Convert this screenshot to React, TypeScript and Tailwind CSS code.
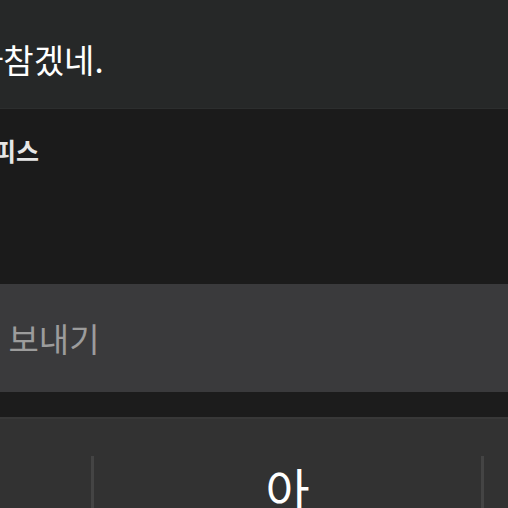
export default function App() {
  return (
    <div
      className="w-[508px] h-[508px] overflow-hidden flex flex-col bg-[#1b1b1b]"
      style={{ fontFamily: '"Noto Sans CJK KR", "Noto Sans", sans-serif' }}
    >
      {/* message bubble */}
      <div className="h-[109px] shrink-0 bg-[#262828] flex items-center pt-[10px] border-b border-[#2c2e2e]">
        <p className="-ml-[27px] whitespace-nowrap text-[33px] leading-none text-white">
          아참겠네.
        </p>
      </div>

      {/* sender */}
      <div className="h-[175px] shrink-0 bg-[#1b1b1b] pt-[29px]">
        <p className="-ml-[30px] whitespace-nowrap text-[25px] leading-none font-semibold text-[#e6e6e6]">
          오피스
        </p>
      </div>

      {/* input */}
      <div className="h-[108px] shrink-0 bg-[#3a3a3c] flex items-center">
        <p className="-ml-[90px] whitespace-nowrap text-[33px] leading-none text-[#9c9c9c]">
          메시지 보내기
        </p>
      </div>

      <div className="h-[25px] shrink-0 bg-[#1c1c1c]" />

      {/* keyboard */}
      <div className="flex-1 bg-[#323232] border-t-2 border-[#383838] flex">
        <div className="w-[91px] shrink-0" />
        <div className="w-[3px] shrink-0 mt-[37px] bg-[#444444]" />
        <div className="flex-1 flex justify-center pt-[45px]">
          <span className="text-[48px] leading-none text-white">아</span>
        </div>
        <div className="w-[3px] shrink-0 mt-[37px] bg-[#444444]" />
        <div className="w-[24px] shrink-0" />
      </div>
    </div>
  );
}
